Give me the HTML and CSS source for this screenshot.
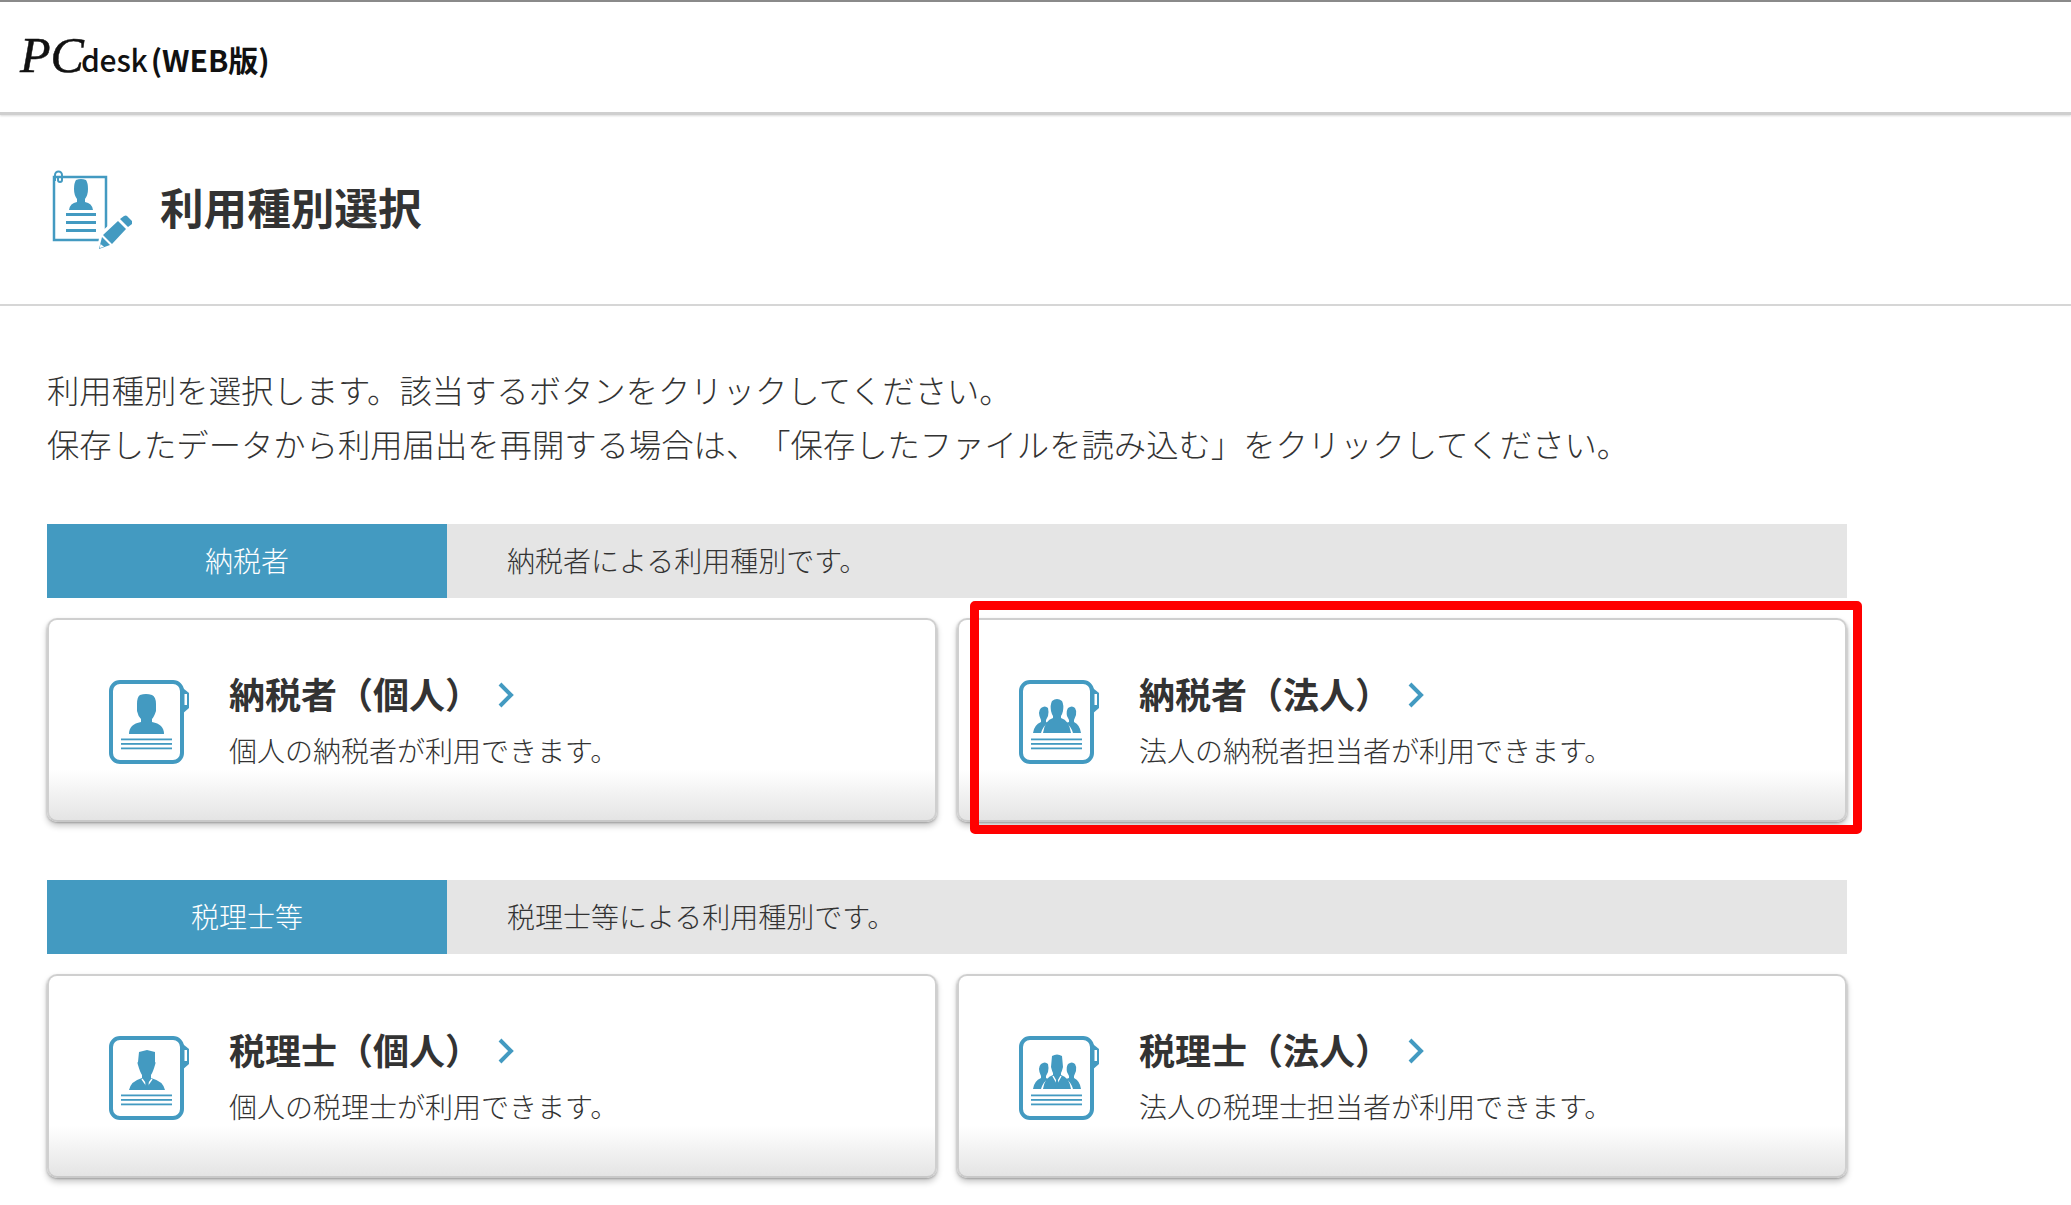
FILE: index.html
```html
<!DOCTYPE html>
<html lang="ja">
<head>
<meta charset="utf-8">
<title>利用種別選択</title>
<link rel="stylesheet" href="styles.css">
</head>
<body>
<svg class="defs" width="0" height="0" aria-hidden="true">
  <defs>
    <g id="doc">
      <path class="ic-fill" d="M64 0 L80 13 V28 L72 35 Z"/>
      <rect class="ic-line" x="2" y="2" width="71" height="80" rx="9"/>
      <rect class="ic-slot" x="75.5" y="14" width="2.5" height="11"/>
      <rect class="ic-fill" x="12" y="58.5" width="51" height="1.8"/>
      <rect class="ic-fill" x="12" y="63" width="51" height="1.8"/>
      <rect class="ic-fill" x="12" y="67.5" width="51" height="1.8"/>
    </g>
  </defs>
</svg>

<header class="topbar">
  <div class="logo"><span class="logo-pc">PC</span><span class="logo-desk">desk</span><span class="logo-web">(WEB版)</span></div>
</header>

<section class="title-row">
  <svg class="title-icon" width="80" height="80" viewBox="0 0 80 80">
    <rect class="ic-line2" x="2" y="8" width="52" height="63"/>
    <path class="ic-clip" d="M3 12 V6 a3.5 3.5 0 0 1 7 0 V11 a2 2 0 0 1 -4 0 V7"/>
    <path class="ic-fill" d="M24 11 Q29 9 34 11 Q36 14 36 20 Q36 26 33 30 V33 Q40 34 41 41 H17 Q18 34 25 33 V30 Q22 26 22 20 Q22 14 24 11Z"/>
    <rect class="ic-fill" x="14" y="44" width="30" height="3"/>
    <rect class="ic-fill" x="14" y="52" width="30" height="3"/>
    <rect class="ic-fill" x="14" y="60" width="30" height="3"/>
    <path class="ic-white" d="M45 80 L48 64 L68 46 L80 58 L60 78Z"/>
    <path class="ic-fill" d="M51 66 L66 52 L74 60 L60 75 Z M68 50 L72 47 Q74 46 75 47 L80 52 Q81 54 80 55 L76 58Z"/>
    <path class="ic-fill" d="M50 68 L47 80 L58 76 Z"/>
    <path class="ic-white" d="M48.5 75 L47.8 79 L52 77.8Z"/>
  </svg>
  <h1 class="page-title">利用種別選択</h1>
</section>

<main class="content">
  <p class="lead">利用種別を選択します。該当するボタンをクリックしてください。<br>保存したデータから利用届出を再開する場合は、「保存したファイルを読み込む」をクリックしてください。</p>

  <section class="group">
    <div class="band"><div class="band-label">納税者</div><div class="band-text">納税者による利用種別です。</div></div>
    <div class="cards">
      <a class="card">
        <svg class="card-icon" width="80" height="84" viewBox="0 0 80 84">
          <use href="#doc"/>
          <path class="ic-fill" d="M31 15 Q37 13 43 15 Q47 17 47 24 L47 31 Q45 37 43 39 L43 42 Q55 44 55 54 H20 Q20 44 32 42 L32 39 Q29 36 28 31 L28 24 Q28 17 31 15Z"/>
        </svg>
        <div class="card-body">
          <div class="card-title">納税者（個人）<svg class="chev" width="18" height="28" viewBox="0 0 18 28"><path d="M3 3 L14 14 L3 25"/></svg></div>
          <div class="card-desc">個人の納税者が利用できます。</div>
        </div>
      </a>
      <a class="card">
        <svg class="card-icon" width="80" height="84" viewBox="0 0 80 84">
          <use href="#doc"/>
          <path class="ic-fill" d="M33 21 Q38 17 43 21 Q45 25 44 31 Q43 35 42 36 V38 Q50 40 52 53 H24 Q26 40 34 38 V36 Q33 35 32 31 Q31 25 33 21Z"/>
          <path class="ic-fill" d="M22 28 Q26 25 29 28 Q30 32 29 36 L27 40 V42 L29 43 Q24 46 22 53 H14 Q15 45 22 42 V40 Q20 36 20 33 Q20 30 22 28Z"/>
          <path class="ic-fill" d="M49 28 Q53 25 56 28 Q58 31 57 35 L55 40 V42 Q61 45 62 53 H54 Q52 46 47 43 L50 42 V40 L48 36 Q47 31 49 28Z"/>
        </svg>
        <div class="card-body">
          <div class="card-title">納税者（法人）<svg class="chev" width="18" height="28" viewBox="0 0 18 28"><path d="M3 3 L14 14 L3 25"/></svg></div>
          <div class="card-desc">法人の納税者担当者が利用できます。</div>
        </div>
        <span class="highlight"></span>
      </a>
    </div>
  </section>

  <section class="group">
    <div class="band"><div class="band-label">税理士等</div><div class="band-text">税理士等による利用種別です。</div></div>
    <div class="cards">
      <a class="card">
        <svg class="card-icon" width="80" height="84" viewBox="0 0 80 84">
          <use href="#doc"/>
          <path class="ic-fill" d="M30 16 L38 14 L46 16 V26 Q47 26 46 29 Q44 36 42 39 V42 Q54 45 56 54 H20 Q22 45 33 42 V39 Q31 36 29 29 Q28 26 29 26Z"/>
          <path class="ic-cut" d="M33 43 L38 50 L43 43"/>
          <path class="ic-fill" d="M36.5 45 H39.5 L40 53 H36Z"/>
        </svg>
        <div class="card-body">
          <div class="card-title">税理士（個人）<svg class="chev" width="18" height="28" viewBox="0 0 18 28"><path d="M3 3 L14 14 L3 25"/></svg></div>
          <div class="card-desc">個人の税理士が利用できます。</div>
        </div>
      </a>
      <a class="card">
        <svg class="card-icon" width="80" height="84" viewBox="0 0 80 84">
          <use href="#doc"/>
          <path class="ic-fill" d="M33 20 Q38 17 43 20 L44 31 Q43 35 42 37 V39 Q50 41 52 53 H24 Q26 41 34 39 V37 Q33 35 32 31Z"/>
          <path class="ic-fill" d="M22 28 Q26 25 29 28 Q30 32 29 36 L27 40 V42 L29 43 Q24 46 22 53 H14 Q15 45 22 42 V40 Q20 36 20 33 Q20 30 22 28Z"/>
          <path class="ic-fill" d="M49 28 Q53 25 56 28 Q58 31 57 35 L55 40 V42 Q61 45 62 53 H54 Q52 46 47 43 L50 42 V40 L48 36 Q47 31 49 28Z"/>
          <path class="ic-cut" d="M34 40 L38 47 L42 40"/>
          <path class="ic-fill" d="M37 44 H39 L39.5 52 H36.5Z"/>
        </svg>
        <div class="card-body">
          <div class="card-title">税理士（法人）<svg class="chev" width="18" height="28" viewBox="0 0 18 28"><path d="M3 3 L14 14 L3 25"/></svg></div>
          <div class="card-desc">法人の税理士担当者が利用できます。</div>
        </div>
      </a>
    </div>
  </section>
</main>
</body>
</html>
```

FILE: styles.css
```css
* { box-sizing: border-box; }
html, body { margin: 0; padding: 0; background: #fff; overflow: hidden; }
body {
  font-family: "Noto Sans CJK JP", "Noto Sans", sans-serif;
  color: #333;
  text-spacing-trim: space-all;
}
.defs { position: absolute; }

.ic-fill { fill: #439ac1; }
.ic-line { fill: #fff; stroke: #439ac1; stroke-width: 4; }
.ic-line2 { fill: #fff; stroke: #439ac1; stroke-width: 2.5; }
.ic-slot { fill: #fff; }
.ic-white { fill: #fff; }
.ic-clip { fill: none; stroke: #439ac1; stroke-width: 2; }
.ic-cut { fill: none; stroke: #fff; stroke-width: 1.4; }

.topbar {
  height: 115px;
  border-top: 2px solid #8a8a8a;
  border-bottom: 3px solid #cfcfcf;
  display: flex;
  align-items: center;
  padding: 0 0 4px 20px;
  box-shadow: 0 1px 2px rgba(0, 0, 0, .15);
  position: relative;
}
.logo { display: flex; align-items: baseline; color: #111; line-height: 1; }
.logo-pc { font-family: "Liberation Serif", serif; font-style: italic; font-size: 50px; -webkit-text-stroke: .5px #111; }
.logo-desk { font-size: 30px; font-weight: 500; margin-left: -3px; letter-spacing: -.2px; }
.logo-web { font-size: 30px; font-weight: 700; margin-left: 3px; }

.title-row {
  height: 191px;
  display: flex;
  align-items: center;
  gap: 27px;
  padding: 0 0 6px 52px;
  border-bottom: 2px solid #d6d6d6;
}
.title-icon { flex: none; margin-top: 4px; }
.page-title { margin: 0; font-size: 43.6px; font-weight: 700; line-height: 1; color: #333; margin-left: 1px; }

.content { width: 1847px; padding: 56px 0 0 47px; }
.lead { margin: 0 0 54px; font-size: 32.35px; line-height: 54px; font-weight: 300; }

.group { margin-bottom: 58px; }
.band { display: flex; height: 74px; background: #e5e5e5; align-items: stretch; font-size: 28px; font-weight: 300; }
.band-label {
  width: 400px; background: #439ac1; color: #fff;
  display: flex; align-items: center; justify-content: center; padding-bottom: 3px;
}
.band-text { display: flex; align-items: center; padding: 0 0 3px 60px; }

.cards { display: grid; grid-template-columns: 890px 890px; gap: 20px; margin-top: 20px; }
.card {
  position: relative;
  display: flex;
  align-items: flex-start;
  height: 204px;
  padding: 60px 0 0 60px;
  border: 2px solid #cfcfcf;
  border-bottom-color: #c8c8c8;
  border-radius: 10px;
  background: linear-gradient(to bottom, #fff 0, #fff 75%, #e4e4e4 100%);
  box-shadow: 0 4px 6px rgba(0, 0, 0, .22), -1px 1px 2px rgba(0, 0, 0, .12), 1px 1px 2px rgba(0, 0, 0, .12);
}
.card-icon { flex: none; display: block; }
.card-body { margin-left: 40px; }
.card-title { display: flex; align-items: center; font-size: 36px; font-weight: 700; line-height: 54px; margin-top: -14px; color: #333; }
.chev { margin-left: 16px; margin-top: 4px; flex: none; }
.chev path { fill: none; stroke: #439ac1; stroke-width: 4; }
.card-desc { font-size: 28px; font-weight: 300; line-height: 40px; margin-top: 10px; }

.highlight {
  position: absolute;
  left: 11px; top: -19px; right: -17px; bottom: -14px;
  border: 9px solid #ff0000;
  border-radius: 5px;
}
```
